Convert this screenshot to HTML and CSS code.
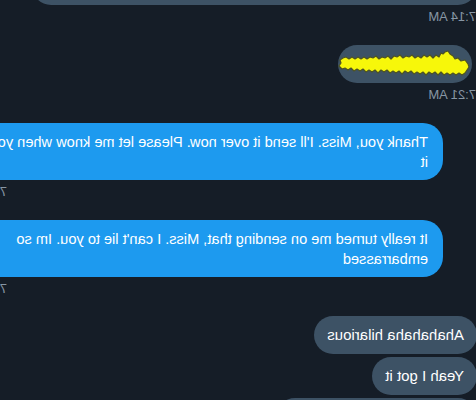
FILE: index.html
```html
<!DOCTYPE html>
<html lang="en">
<head>
<meta charset="utf-8">
<title>Messages</title>
<link rel="stylesheet" href="styles.css">
</head>
<body>
<main class="thread">
  <section class="group in">
    <div class="bubble in cut"></div>
  </section>
  <div class="ts">7:14 AM</div>

  <section class="group in">
    <div class="bubble in redacted">
      <svg class="scribble" viewBox="0 0 134 38" width="134" height="38" aria-hidden="true">
        <polygon points="4,19 7,15 11,16 14,13 17,14 19,11 22,9 24,6 27,7 29,9 31,8 33,12 36,10 39,13 42,10 45,12 48,10 51,13 54,11 57,13 60,10 63,12 66,11 69,13 72,10 75,12 78,11 81,14 84,11 87,13 90,12 93,14 96,11 99,13 102,12 105,14 108,12 111,14 114,12 117,14 120,12 123,14 126,12 129,13 132,15 131,18 133,21 130,24 127,23 124,25 121,23 118,26 115,24 112,26 109,24 106,27 103,25 100,27 97,25 94,28 91,25 88,27 85,25 82,28 79,26 76,28 73,26 70,29 67,26 64,28 61,26 58,29 55,27 52,29 49,27 46,30 43,27 40,29 37,27 34,30 31,27 28,30 25,28 22,30 19,28 16,30 13,28 10,30 7,28 5,25 3,22" fill="#f7f70a" stroke="#4f5422" stroke-width="1.2" stroke-linejoin="round"/>
      </svg>
    </div>
  </section>
  <div class="ts">7:21 AM</div>

  <section class="group out">
    <div class="bubble out">Thank you, Miss. I'll send it over now. Please let me know when you get<br>it</div>
    <div class="ts out">7:22 AM</div>
  </section>

  <section class="group out">
    <div class="bubble out">It really turned me on sending that, Miss. I can't lie to you. Im so<br>embarrassed</div>
    <div class="ts out">7:24 AM</div>
  </section>

  <section class="group in stack">
    <div class="bubble in">Ahahahaha hilarious</div>
    <div class="bubble in">Yeah I got it</div>
    <div class="bubble in wide">I'm glad it did</div>
  </section>
</main>
</body>
</html>
```

FILE: styles.css
```css
html, body {
  margin: 0;
  padding: 0;
  height: 100%;
  overflow: hidden;
  background: #151d27;
}

.thread {
  width: 476px;
  transform: scaleX(-1);
  display: flex;
  flex-direction: column;
  align-items: flex-start;
  font-family: "Liberation Sans", Arial, sans-serif;
  color: #ffffff;
}

.group {
  display: flex;
  flex-direction: column;
  align-items: flex-start;
  margin-top: 20px;
}

.group.stack {
  gap: 3px;
  margin-top: 19px;
}

.bubble {
  box-sizing: border-box;
  font-size: 15px;
  line-height: 20px;
  white-space: nowrap;
  border-radius: 19px;
}

.bubble.in {
  background: #3d5265;
  padding: 9px 13px;
  margin-left: -1px;
}

.bubble.cut {
  width: 445px;
  height: 60px;
  margin-left: -1px;
}

.group.in:first-child {
  margin-top: -55px;
}

.bubble.redacted {
  width: 134px;
  height: 38px;
  padding: 0;
  margin-left: 4px;
}

.scribble {
  display: block;
}

.bubble.wide {
  width: 201px;
}

.bubble.out {
  background: #1d9aef;
  width: 540px;
  margin-left: 33px;
  padding: 9px 16px 8px 15px;
  border-radius: 20px;
  font-size: 14.6px;
}

.ts {
  margin-top: 4px;
  font-size: 13px;
  line-height: 16px;
  color: #8796a4;
  white-space: nowrap;
}

.ts.out {
  padding-left: 469px;
}
```
